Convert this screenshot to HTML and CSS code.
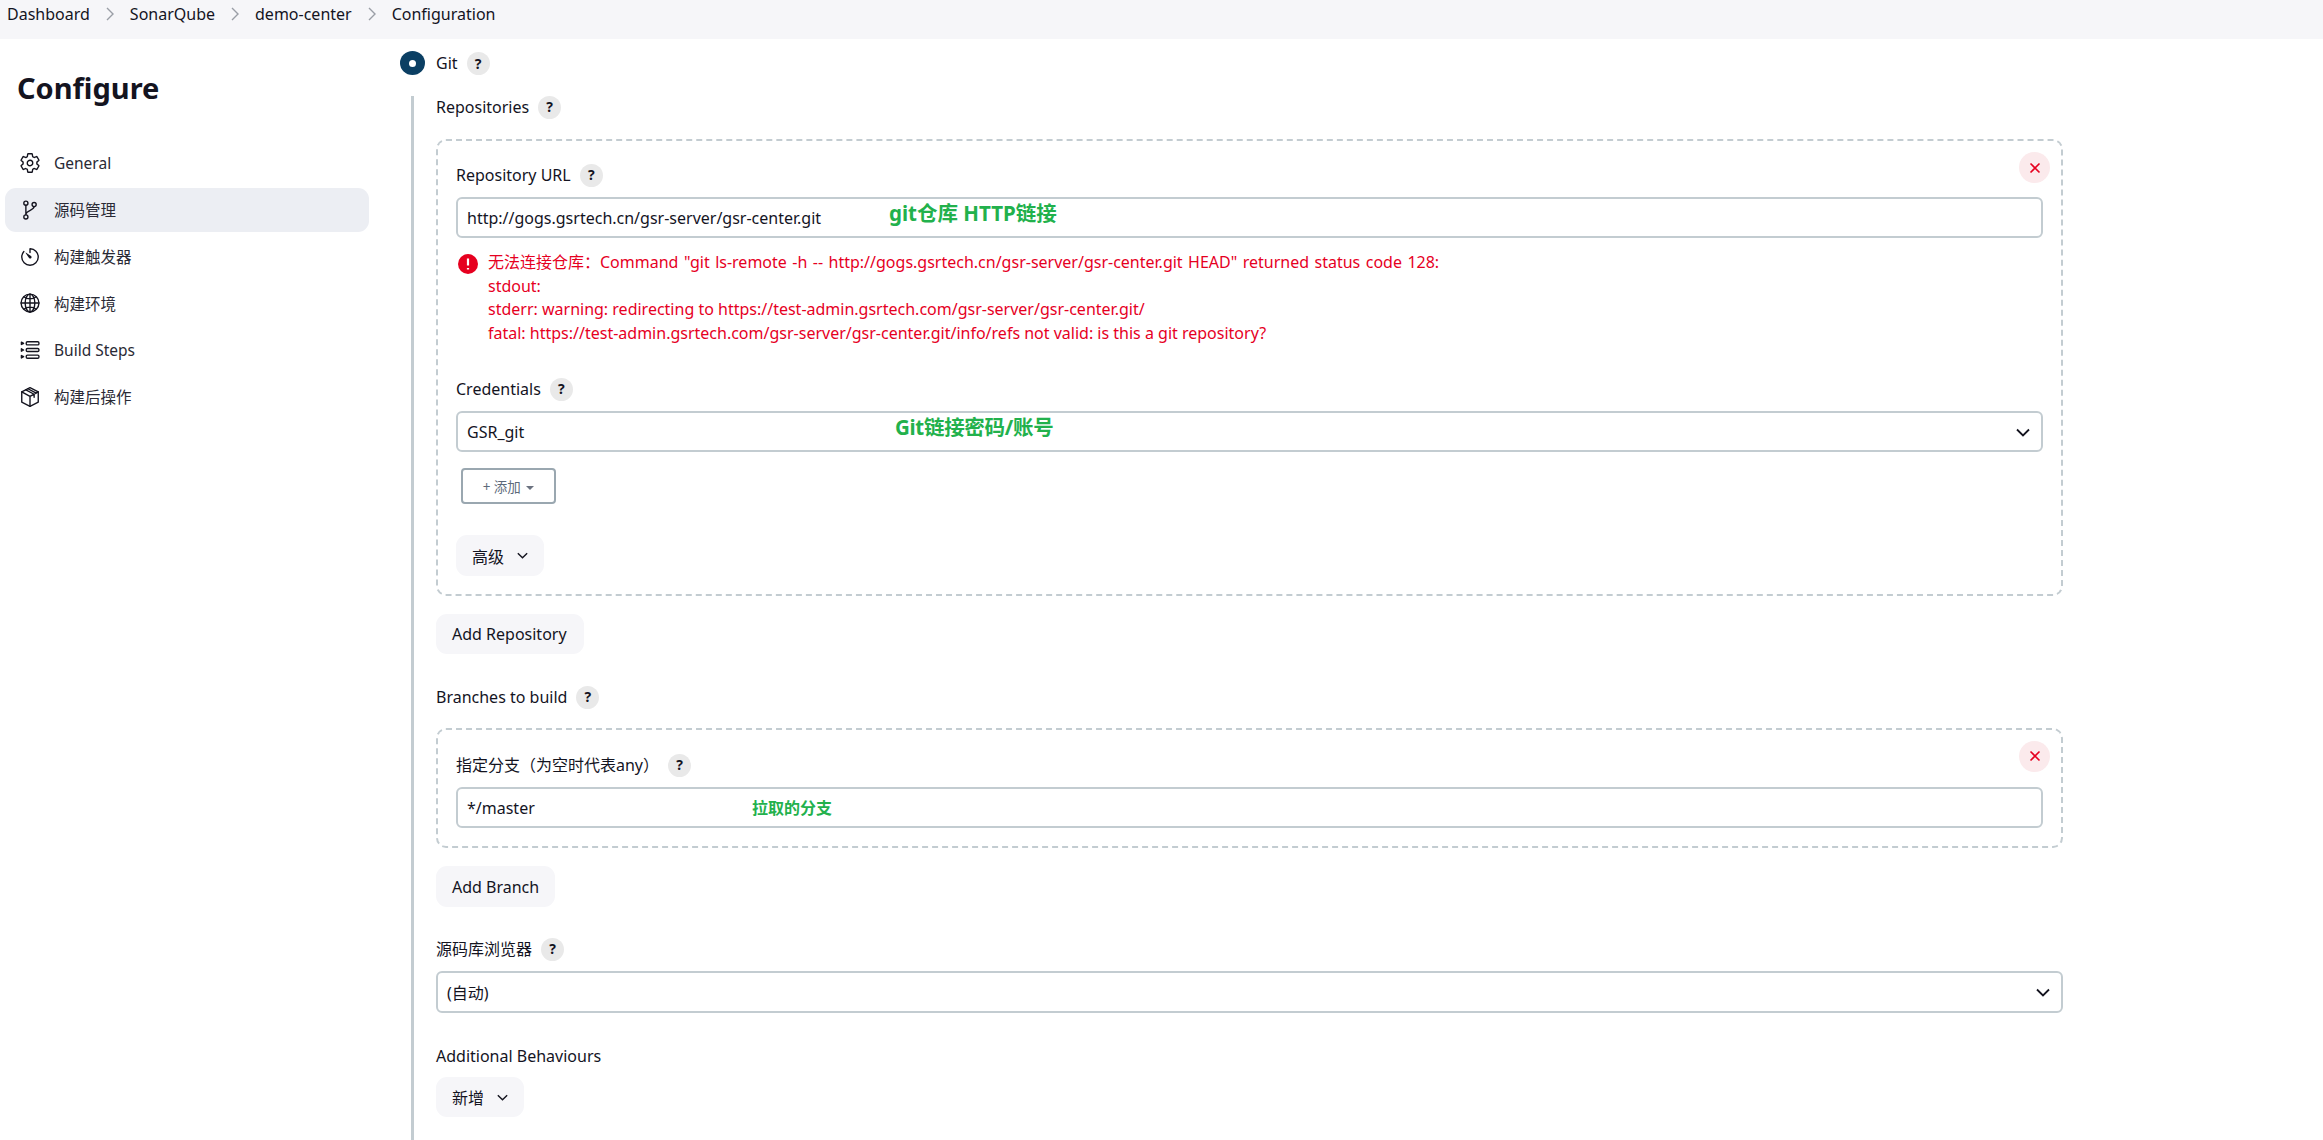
FILE: index.html
```html
<!DOCTYPE html>
<html lang="zh">
<head>
<meta charset="utf-8">
<title>Configure</title>
<link rel="stylesheet" href="styles.css">
</head>
<body>
<nav class="crumbs">
  <span>Dashboard</span><svg class="sep" viewBox="0 0 10 14"><path d="M2 1l6 6-6 6"/></svg>
  <span>SonarQube</span><svg class="sep" viewBox="0 0 10 14"><path d="M2 1l6 6-6 6"/></svg>
  <span>demo-center</span><svg class="sep" viewBox="0 0 10 14"><path d="M2 1l6 6-6 6"/></svg>
  <span>Configuration</span>
</nav>
<div class="layout">
  <aside class="sidebar">
    <h1 class="title">Configure</h1>
    <ul class="menu">
      <li class="item"><svg class="icon" viewBox="0 0 512 512"><path d="M262.29 192.31a64 64 0 1057.4 57.4 64.13 64.13 0 00-57.4-57.4zM416.39 256a154.34 154.34 0 01-1.53 20.79l45.21 35.46a10.81 10.81 0 012.45 13.75l-42.77 74a10.81 10.81 0 01-13.14 4.59l-44.9-18.08a16.11 16.11 0 00-15.17 1.75A164.48 164.48 0 01325 400.8a15.94 15.94 0 00-8.82 12.14l-6.73 47.89a11.08 11.08 0 01-10.68 9.17h-85.54a11.11 11.11 0 01-10.69-8.87l-6.72-47.82a16.07 16.07 0 00-9-12.22 155.3 155.3 0 01-21.46-12.57 16 16 0 00-15.11-1.71l-44.89 18.07a10.81 10.81 0 01-13.14-4.58l-42.77-74a10.8 10.8 0 012.45-13.75l38.21-30a16.05 16.05 0 006-14.08c-.36-4.17-.58-8.33-.58-12.5s.21-8.27.58-12.35a16 16 0 00-6.07-13.94l-38.19-30A10.81 10.81 0 0149.48 186l42.77-74a10.81 10.81 0 0113.14-4.59l44.9 18.08a16.11 16.11 0 0015.17-1.75A164.48 164.48 0 01187 111.2a15.94 15.94 0 008.82-12.14l6.73-47.89A11.08 11.08 0 01213.23 42h85.54a11.11 11.11 0 0110.69 8.87l6.72 47.82a16.07 16.07 0 009 12.22 155.3 155.3 0 0121.46 12.57 16 16 0 0015.11 1.71l44.89-18.07a10.81 10.81 0 0113.14 4.58l42.77 74a10.8 10.8 0 01-2.45 13.75l-38.21 30a16.05 16.05 0 00-6.05 14.08c.33 4.14.55 8.3.55 12.47z"/></svg>General</li>
      <li class="item active"><svg class="icon" viewBox="0 0 512 512"><circle cx="160" cy="96" r="48"/><circle cx="160" cy="416" r="48"/><circle cx="352" cy="128" r="48"/><path d="M160 144v224M352 176c0 96-192 80-192 192"/></svg>源码管理</li>
      <li class="item"><svg class="icon" viewBox="0 0 512 512"><path d="M112.91 128A191.85 191.85 0 0064 254c-1.18 106.35 85.65 193.8 192 194 106.2.2 192-85.83 192-192 0-104.54-83.55-189.61-187.5-192a4.36 4.36 0 00-4.5 4.37V152"/><path d="M233.38 278.63l-79-113a8.13 8.13 0 0111.32-11.32l113 79a32.5 32.5 0 01-37 53.34 33.21 33.21 0 01-8.32-9.02z" class="solid"/></svg>构建触发器</li>
      <li class="item"><svg class="icon" viewBox="0 0 512 512"><path d="M256 48C141.13 48 48 141.13 48 256s93.13 208 208 208 208-93.13 208-208S370.87 48 256 48z"/><path d="M256 48c-58.07 0-112.67 93.13-112.67 208S197.93 464 256 464s112.67-93.13 112.67-208S314.07 48 256 48z"/><path d="M117.33 117.33c38.24 27.15 86.38 43.34 138.67 43.34s100.43-16.19 138.67-43.34M394.67 394.67c-38.24-27.15-86.38-43.34-138.67-43.34s-100.43 16.19-138.67 43.34M256 48v416M464 256H48"/></svg>构建环境</li>
      <li class="item"><svg class="icon" viewBox="0 0 512 512"><rect x="168" y="64" width="296" height="72" rx="28"/><rect x="168" y="220" width="296" height="72" rx="28"/><rect x="168" y="376" width="296" height="72" rx="28"/><path d="M56 72l52 28-52 28zM56 228l52 28-52 28zM56 384l52 28-52 28z"/></svg>Build Steps</li>
      <li class="item"><svg class="icon" viewBox="0 0 512 512"><path d="M256 40l192 96v240L256 472 64 376V136z"/><path d="M64 136l192 104 192-104M256 240v232M160 88l192 104v72M208 64l192 104"/></svg>构建后操作</li>
    </ul>
  </aside>
  <main class="content">
    <div class="git-row"><span class="radio"></span><span>Git</span><span class="help">?</span></div>
    <div class="rail">
      <div class="label">Repositories<span class="help">?</span></div>
      <section class="box repo-box">
        <button class="remove" type="button"><svg viewBox="0 0 12 12"><path d="M1.5 1.5l9 9M10.5 1.5l-9 9"/></svg></button>
        <div class="label">Repository URL<span class="help">?</span></div>
        <div class="field">http://gogs.gsrtech.cn/gsr-server/gsr-center.git<span class="note note-url">git仓库 HTTP链接</span></div>
        <div class="error">
          <svg class="err-icon" viewBox="0 0 20 20"><circle cx="10" cy="10" r="10"/><path d="M10 4.5v7M10 14v1.5"/></svg>
          <div class="err-text">
            <div class="err-first">无法连接仓库：Command "git ls-remote -h -- http://gogs.gsrtech.cn/gsr-server/gsr-center.git HEAD" returned status code 128:</div>
            <div>stdout:</div>
            <div>stderr: warning: redirecting to https://test-admin.gsrtech.com/gsr-server/gsr-center.git/</div>
            <div>fatal: https://test-admin.gsrtech.com/gsr-server/gsr-center.git/info/refs not valid: is this a git repository?</div>
          </div>
        </div>
        <div class="label cred-label">Credentials<span class="help">?</span></div>
        <div class="field select">GSR_git<span class="note note-cred">Git链接密码/账号</span><svg class="chev" viewBox="0 0 14 9"><path d="M1 1.5l6 6 6-6"/></svg></div>
        <button class="add-btn" type="button">+ 添加 <i class="caret"></i></button>
        <button class="btn adv" type="button">高级<svg class="chev small" viewBox="0 0 14 9"><path d="M1 1.5l6 6 6-6"/></svg></button>
      </section>
      <button class="btn add-repo" type="button">Add Repository</button>
      <div class="label section">Branches to build<span class="help">?</span></div>
      <section class="box branch-box">
        <button class="remove" type="button"><svg viewBox="0 0 12 12"><path d="M1.5 1.5l9 9M10.5 1.5l-9 9"/></svg></button>
        <div class="label">指定分支（为空时代表any）<span class="help">?</span></div>
        <div class="field">*/master<span class="note note-branch">拉取的分支</span></div>
      </section>
      <button class="btn add-branch" type="button">Add Branch</button>
      <div class="label section browser-label">源码库浏览器<span class="help">?</span></div>
      <div class="field select browser">(自动)<svg class="chev" viewBox="0 0 14 9"><path d="M1 1.5l6 6 6-6"/></svg></div>
      <div class="label section">Additional Behaviours</div>
      <button class="btn add-new" type="button">新增<svg class="chev small" viewBox="0 0 14 9"><path d="M1 1.5l6 6 6-6"/></svg></button>
    </div>
  </main>
</div>
</body>
</html>
```
FILE: styles.css
```css
* { box-sizing: border-box; }
html, body { margin: 0; height: 1140px; overflow: hidden; background: #fff; }
body {
  font-family: "Noto Sans", "Noto Sans CJK SC", sans-serif;
  font-size: 16px;
  color: #14141f;
}
.crumbs {
  height: 39px;
  background: #f6f6f9;
  display: flex;
  align-items: center;
  padding: 0 0 11px 7px;
  gap: 15px;
  font-size: 16px;
}
.sep { width: 10px; height: 14px; fill: none; stroke: #9a9ea6; stroke-width: 1.4; }
.layout { display: flex; height: 1101px; }
.sidebar { width: 400px; flex: none; }
.title { margin: 25px 0 0 17px; font-size: 29px; line-height: 48px; font-weight: 700; }
.menu { list-style: none; margin: 29px 0 0 5px; padding: 0; width: 364px; display: flex; flex-direction: column; gap: 2.8px; }
.item { height: 44px; border-radius: 11px; display: flex; align-items: center; padding-left: 14px; gap: 13px; font-size: 15.5px; color: #2a2a35; }
.active { background: #eceef3; }
.icon { width: 22px; height: 22px; flex: none; fill: none; stroke: #14141f; stroke-width: 32; stroke-linecap: round; stroke-linejoin: round; }
.icon .solid { fill: #14141f; stroke: none; }
.content { flex: 1; display: flex; flex-direction: column; min-width: 0; }
.git-row { margin-top: 12px; height: 24px; display: flex; align-items: center; }
.git-row .radio { margin-right: 11px; }
.radio { width: 25px; height: 24px; border-radius: 50%; background: #0b3f63; position: relative; flex: none; }
.radio::after { content: ""; position: absolute; left: 9px; top: 8.5px; width: 7px; height: 7px; border-radius: 50%; background: #fff; }
.rail {
  margin: 21px 260px 0 11px;
  flex: 1;
  border-left: 3px solid #c3ccd1;
  padding-left: 22px;
  display: flex;
  flex-direction: column;
  align-items: flex-start;
}
.label { height: 22px; line-height: 22px; display: flex; align-items: center; }
.help {
  width: 23px; height: 23px; border-radius: 50%;
  background: #e9e9e9; font-size: 14px; font-weight: 700;
  display: inline-flex; align-items: center; justify-content: center;
  margin-left: 9px; flex: none;
}
.box {
  position: relative;
  align-self: stretch;
  border: 2px dashed #c3ccd1;
  border-radius: 10px;
  margin-top: 21px;
  padding: 23px 18px 18px 18px;
  display: flex;
  flex-direction: column;
  align-items: flex-start;
}
.remove {
  position: absolute; right: 11px; top: 11px;
  width: 31px; height: 31px; border: 0; border-radius: 50%;
  background: #fbeaec; display: flex; align-items: center; justify-content: center; padding: 0;
}
.remove svg { width: 12px; height: 12px; fill: none; stroke: #e6001f; stroke-width: 1.6; }
.field {
  position: relative;
  align-self: stretch;
  height: 41px;
  margin-top: 11px;
  border: 2px solid #c3ccd1;
  border-radius: 6px;
  display: flex;
  align-items: center;
  padding-left: 9px;
}
.note { position: absolute; font-weight: 700; color: #22b14c; font-size: 20.5px; line-height: 28px; white-space: nowrap; }
.note-url { left: 431px; top: 0; }
.note-cred { left: 437px; top: 0; letter-spacing: -0.3px; }
.note-branch { left: 294px; top: 7px; font-size: 16px; line-height: 24px; }
.chev { width: 14px; height: 9px; fill: none; stroke: #14141f; stroke-width: 1.8; }
.select .chev { position: absolute; right: 11px; top: 15px; }
.chev.small { width: 11px; height: 7px; margin-left: 13px; }
.error { display: flex; margin-top: 13px; color: #e6001f; line-height: 23.6px; gap: 10px; padding-left: 2px; }
.err-first { word-spacing: 1.3px; }
.err-icon { width: 20px; height: 20px; margin-top: 3px; flex: none; fill: #e6001f; stroke: #fff; stroke-width: 2.2; }
.err-icon circle { stroke: none; }
.cred-label { margin-top: 33px; }
.add-btn {
  margin: 16px 0 0 5px; width: 95px; height: 36px;
  border: 2px solid #9aa7b0; border-radius: 4px; background: #fff;
  font: 13.5px "Noto Sans", "Noto Sans CJK SC", sans-serif; color: #5c6a7a;
  padding: 0;
}
.caret { display: inline-block; width: 0; height: 0; border: 4px solid transparent; border-top: 4px solid #6b7280; border-bottom: 0; vertical-align: 2px; margin-left: 2px; }
.btn {
  height: 41px; border: 0; border-radius: 11px; background: #f6f6f9;
  padding: 0 16px; font: 16px "Noto Sans", "Noto Sans CJK SC", sans-serif; color: #14141f;
  display: inline-flex; align-items: center;
}
.adv { margin-top: 31px; }
.add-repo { margin-top: 18px; height: 40px; padding-right: 17px; }
.section { margin-top: 32px; }
.branch-box { margin-top: 19.5px; padding-top: 24.5px; }
.add-branch { margin-top: 18px; }
.browser-label { margin-top: 31px; }
.browser { height: 42px; }
.add-new { margin-top: 10px; height: 40px; }
```
